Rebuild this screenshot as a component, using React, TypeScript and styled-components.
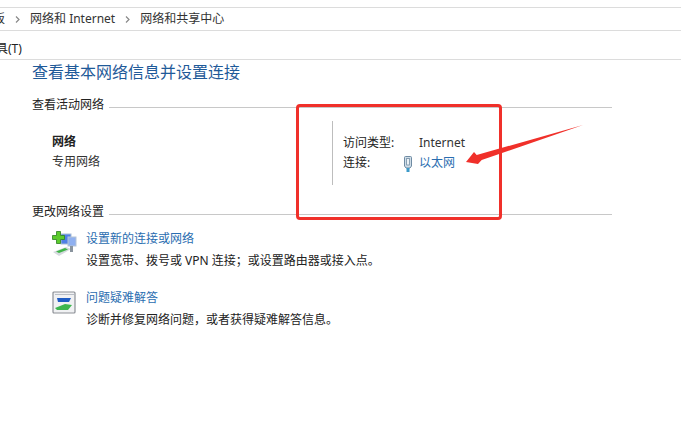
import React from "react";
import styled, { createGlobalStyle } from "styled-components";

const Global = createGlobalStyle`
  html, body { margin: 0; padding: 0; background: #fff; }
  body { font-family: "Noto Sans", "Noto Sans CJK SC", sans-serif; font-size: 12px; color: #1a1a1a; }
`;
const Page = styled.div`
  position: relative; width: 681px; height: 435px; overflow: hidden; background: #fff; padding-top: 7px; box-sizing: border-box;
`;
const Breadcrumb = styled.div`
  display: flex; align-items: center; height: 22px; box-sizing: content-box;
  border-top: 1px solid #dcdcdc; border-bottom: 1px solid #dcdcdc;
  margin-left: -7px; color: #333; font-size: 12px; line-height: 18px;
`;
const Crumb = styled.span`white-space: nowrap;`;
const Chevron = styled.svg`width: 5px; height: 7px; margin: 0 10px; flex: none;`;
const MenuBar = styled.div`
  height: 29px; box-sizing: border-box; display: flex; align-items: flex-end; padding: 0 0 2px 0;
  margin-left: -4px; border-bottom: 1px solid #dcdcdc; font-size: 12px; line-height: 16px; color: #222;
`;
const Main = styled.main`width: 580px; margin-left: 32px; display: flex; flex-direction: column;`;
const Heading = styled.h1`
  margin: 2px 0 15px; font-size: 16px; font-weight: 400; line-height: 20px; color: #1f5a99;
`;
const SectionHead = styled.div`
  display: flex; align-items: center; gap: 5px; height: 16px; line-height: 16px; color: #222; white-space: nowrap;
  &::after { content: ""; flex: 1; height: 1px; background: #c8c8c8; margin-top: 5px; }
`;
const Active = styled.section`display: flex; height: 64px; margin-top: 8px; margin-bottom: 19px;`;
const NetName = styled.div`width: 300px; flex: none; padding: 13px 0 0 20px; box-sizing: border-box; display: flex; flex-direction: column; gap: 4px; line-height: 16px;`;
const Bold = styled.span`font-weight: 600; color: #222;`;
const Plain = styled.span`color: #333;`;
const Props = styled.div`
  border-left: 1px solid #bdbdbd; padding: 12px 0 0 10px; display: grid; grid-template-columns: 76px auto; grid-auto-rows: 20px; align-items: center; align-content: start; line-height: 16px; color: #222;
`;
const ValueCell = styled.div`position: relative; display: flex; align-items: center;`;
const EthIcon = styled.svg`position: absolute; left: -16px; top: 1px; width: 10px; height: 17px;`;
const Link = styled.a`color: #2a6db0; text-decoration: none; white-space: nowrap;`;
const Task = styled.div`display: flex; padding-left: 20px; height: 59px;`;
const IconBox = styled.div`width: 34px; flex: none;`;
const TaskIcon = styled.svg<{ $top: number }>`display: block; width: 25px; height: 26px; margin-top: ${(p) => p.$top}px;`;
const TaskText = styled.div`display: flex; flex-direction: column; gap: 6px; line-height: 16px; margin-top: 5px;`;
const Tasks = styled.div`display: flex; flex-direction: column; margin-top: 6px;`;
const Desc = styled.span`color: #222; white-space: nowrap;`;
const Highlight = styled.div`
  position: absolute; left: 296px; top: 104px; width: 206px; height: 116px; box-sizing: border-box;
  border: 3px solid #f0302a; border-radius: 4px;
`;
const Arrow = styled.svg`position: absolute; left: 460px; top: 120px; width: 130px; height: 50px;`;

const setupDesc = "设置宽带、拨号或 VPN 连接\uFF1B或设置路由器或接入点。";
const fixDesc = "诊断并修复网络问题\uFF0C或者获得疑难解答信息。";

export default function App() {
  return (
    <Page>
      <Global />
      <Breadcrumb>
        <Crumb>板</Crumb>
        <Chevron viewBox="0 0 5 7"><path d="M1 0.5 4 3.5 1 6.5" fill="none" stroke="#888" strokeWidth="1.2" /></Chevron>
        <Crumb>网络和 Internet</Crumb>
        <Chevron viewBox="0 0 5 7"><path d="M1 0.5 4 3.5 1 6.5" fill="none" stroke="#888" strokeWidth="1.2" /></Chevron>
        <Crumb>网络和共享中心</Crumb>
      </Breadcrumb>
      <MenuBar>具(T)</MenuBar>
      <Main>
        <Heading>查看基本网络信息并设置连接</Heading>
        <SectionHead>查看活动网络</SectionHead>
        <Active>
          <NetName>
            <Bold>网络</Bold>
            <Plain>专用网络</Plain>
          </NetName>
          <Props>
            <span>访问类型:</span>
            <Plain>Internet</Plain>
            <span>连接:</span>
            <ValueCell>
              <EthIcon viewBox="0 0 10 17">
                <path d="M1.5 1.5 Q1.5 .5 2.5 .5 H7.5 Q8.5 .5 8.5 1.5 V10 L7 12 H3 L1.5 10 Z" fill="#cfdde8" stroke="#6f8ba3" />
                <rect x="3.7" y="2.5" width="2.6" height="6.5" fill="#f4f8fb" stroke="#5f7d96" strokeWidth=".7" />
                <rect x="3.5" y="12" width="3" height="4" fill="#3c9ac9" />
              </EthIcon>
              <Link href="#">以太网</Link>
            </ValueCell>
          </Props>
        </Active>
        <SectionHead>更改网络设置</SectionHead>
        <Tasks>
          <Task>
            <IconBox>
              <TaskIcon $top={5} viewBox="0 0 25 26">
                <rect x="9" y="3" width="10" height="10" fill="#4f7fe6" stroke="#a9bdd4" />
                <rect x="16" y="6" width="8" height="9" fill="#8fb0f0" stroke="#b5c4d6" />
                <path d="M4.5 0.5h4v4h4v4h-4v4h-4v-4h-4v-4h4z" fill="#5ccb2c" stroke="#2c7d22" strokeWidth=".8" />
                <path d="M1 21 14 16l5 2-12 7z" fill="#d5d9de" />
                <path d="M4 20.5l9-3.5 3 1.500-9 3.500z" fill="#3fb548" />
                <rect x="18" y="15" width="3" height="6" fill="#8a949e" />
              </TaskIcon>
            </IconBox>
            <TaskText>
              <Link href="#">设置新的连接或网络</Link>
              <Desc>{setupDesc}</Desc>
            </TaskText>
          </Task>
          <Task>
            <IconBox>
              <TaskIcon $top={6} viewBox="0 0 25 26">
                <rect x="1" y="1" width="22" height="21" rx="1" fill="#f0f1f3" stroke="#8b8f96" strokeWidth="1.2" />
                <path d="M3 3h19v1H3z" fill="#b9bec6" />
                <path d="M5 7h14l-2 4H6z" fill="#1f5cc4" />
                <path d="M3 17l10-4 7 1-4 5H5z" fill="#3db64f" />
              </TaskIcon>
            </IconBox>
            <TaskText>
              <Link href="#">问题疑难解答</Link>
              <Desc>{fixDesc}</Desc>
            </TaskText>
          </Task>
        </Tasks>
      </Main>
      <Highlight />
      <Arrow viewBox="0 0 130 50">
        <path d="M123 5 L21.700 40 L18 44 L6 42 L14 32 L16.700 35 Z" fill="#f0302a" />
      </Arrow>
    </Page>
  );
}
